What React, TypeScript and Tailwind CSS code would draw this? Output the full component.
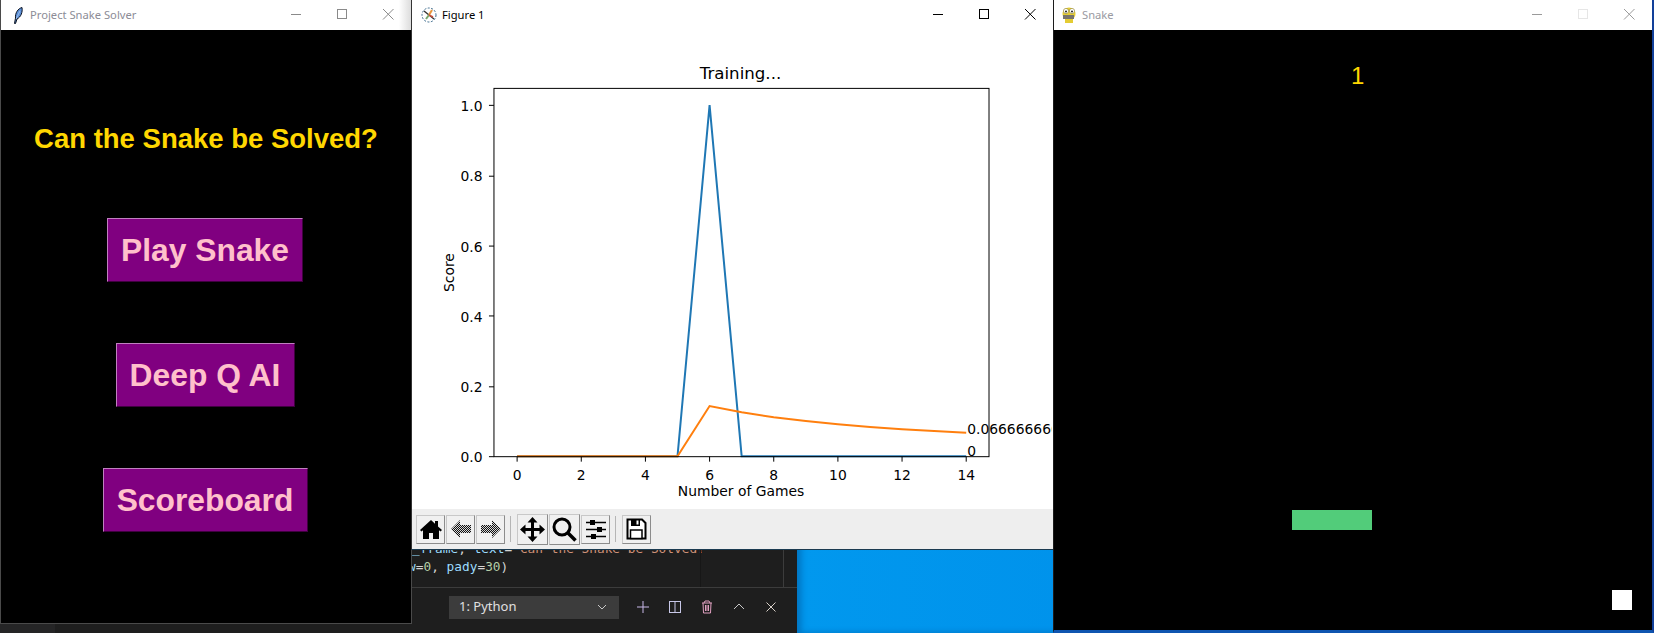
import React from 'react';

const blue = [0, 0, 0, 0, 0, 0, 1, 0, 0, 0, 0, 0, 0, 0, 0];
const mean = [0, 0, 0, 0, 0, 0, 1 / 7, 1 / 8, 1 / 9, 1 / 10, 1 / 11, 1 / 12, 1 / 13, 1 / 14, 1 / 15];

const px = (i: number) => 516.7 + i * 32.14 - 412;
const py = (v: number) => 457 - v * 351.7 - 30;
const line = (data: number[]) => data.map((v, i) => `${px(i)},${py(v)}`).join(' ');

const TitleButtons = ({ color, maxColor }: { color: string; maxColor?: string }) => (
  <div className="flex items-center">
    <svg width="46" height="30" viewBox="0 0 46 30"><path d="M18 14.500h10" stroke={color} fill="none" /></svg>
    <svg width="46" height="30" viewBox="0 0 46 30"><rect x="18.500" y="9.500" width="9" height="9" stroke={maxColor || color} fill="none" /></svg>
    <svg width="46" height="30" viewBox="0 0 46 30"><path d="M18 9l10.500 10.500M28.500 9L18 19.500" stroke={color} fill="none" /></svg>
  </div>
);

const Feather = () => (
  <svg width="10" height="17" viewBox="0 0 10 17">
    <path d="M1.500 16.500L2.500 11C2 6 5 1.500 9 .5C9.800 5 8 10 4 12L2.500 16.500Z" fill="#5b8fd8" stroke="#0b1220" strokeWidth="1" />
    <path d="M3 12L7 4" stroke="#cfe0f5" strokeWidth=".6" />
  </svg>
);

const FigureIcon = () => (
  <svg width="16" height="16" viewBox="0 0 16 16">
    <circle cx="8" cy="8" r="7" fill="#fff" stroke="#3b6a8c" strokeDasharray="2 1.500" />
    <path d="M3 4l10 8" stroke="#333" strokeWidth="1.400" />
    <path d="M8 8l3-5" stroke="#e9963c" strokeWidth="2" />
    <path d="M8 8l-3 4" stroke="#7aa86b" strokeWidth="2" />
    <path d="M8 8l4 2" stroke="#c9503c" strokeWidth="1.500" />
  </svg>
);

const PygameIcon = () => (
  <svg width="16" height="18" viewBox="0 0 16 18">
    <ellipse cx="8" cy="8" rx="6.500" ry="6.500" fill="#e4cc33" />
    <rect x="2" y="9" width="11" height="4" fill="#77736a" />
    <circle cx="5" cy="5" r="2.600" fill="#fff" stroke="#8a7a20" strokeWidth=".6" />
    <circle cx="11" cy="5" r="2.600" fill="#fff" stroke="#8a7a20" strokeWidth=".6" />
    <circle cx="5" cy="5.400" r="1" fill="#222" />
    <circle cx="11" cy="5.400" r="1" fill="#222" />
    <rect x="4" y="13" width="8" height="4" fill="#e4cc33" />
  </svg>
);

const ToolButton = ({ size, children }: { size: string; children: React.ReactNode }) => (
  <div className={`${size} flex items-center justify-center bg-[#f0f0f0] border border-t-[#c8c8c8] border-l-[#c8c8c8] border-r-[#8c8c8c] border-b-[#8c8c8c]`}>
    {children}
  </div>
);

const MenuButton = ({ label, width }: { label: string; width: string }) => (
  <button className={`${width} h-[64px] pt-[2px] bg-[#800080] text-[#ffc0cb] text-[31.800px] font-bold font-['Liberation_Sans',sans-serif] border border-t-[#c080c0] border-l-[#c080c0] border-r-[#400040] border-b-[#400040]`}>
    {label}
  </button>
);

const Chart = () => (
  <svg width="640" height="480" viewBox="0 0 640 480" className="block font-['DejaVu_Sans',sans-serif]">
    <text x="328.500" y="49" fontSize="16.670" textAnchor="middle" fill="#000">Training...</text>
    <polyline points={line(blue)} fill="none" stroke="#1f77b4" strokeWidth="2" />
    <polyline points={line(mean)} fill="none" stroke="#ff7f0e" strokeWidth="2" />
    <rect x="81.500" y="58.500" width="496" height="369" fill="none" stroke="#000" strokeWidth="1" />
    {[0, 2, 4, 6, 8, 10, 12, 14].map(t => (
      <g key={t}>
        <path d={`M${px(t)} 427.500v5`} stroke="#000" />
        <text x={px(t)} y="451" fontSize="13.890" textAnchor="middle" fill="#000">{t}</text>
      </g>
    ))}
    {[0, 0.2, 0.4, 0.6, 0.8, 1].map(t => (
      <g key={t}>
        <path d={`M76.500 ${Math.round(py(t)) + 0.5}h5`} stroke="#000" />
        <text x="70" y={py(t) + 6} fontSize="13.890" textAnchor="end" fill="#000">{t.toFixed(1)}</text>
      </g>
    ))}
    <text x="329" y="467" fontSize="13.890" textAnchor="middle" fill="#000">Number of Games</text>
    <text fontSize="13.890" textAnchor="middle" fill="#000" transform="translate(41,243) rotate(-90)">Score</text>
    <text x={px(14) + 1} y="405" fontSize="13.890" fill="#000">0.06666666666666667</text>
    <text x={px(14) + 1} y="427" fontSize="13.890" fill="#000">0</text>
  </svg>
);

const Toolbar = () => (
  <div className="h-[40px] bg-[#eeeeee] flex items-center pl-[4px] gap-[1px]">
    <svg width="0" height="0" className="absolute">
      <defs>
        <pattern id="dither" width="2" height="2" patternUnits="userSpaceOnUse">
          <rect width="2" height="2" fill="#d8d8d8" />
          <rect width="1" height="1" fill="#111" />
          <rect x="1" y="1" width="1" height="1" fill="#111" />
        </pattern>
      </defs>
    </svg>
    <ToolButton size="w-[29px] h-[29px]">
      <svg width="24" height="22" viewBox="0 0 24 22"><path d="M12 2L1 12l1.500 1.500L4 12.300V21h6v-6h4v6h6v-8.700l1.500 1.200L23 12l-4-3.600V3h-3v2.700z" fill="#000" /></svg>
    </ToolButton>
    <ToolButton size="w-[29px] h-[29px]">
      <svg width="22" height="20" viewBox="0 0 22 20"><path d="M1 10l9-9v5h11v8H10v5z" fill="url(#dither)" /></svg>
    </ToolButton>
    <ToolButton size="w-[29px] h-[29px]">
      <svg width="22" height="20" viewBox="0 0 22 20"><path d="M21 10l-9-9v5H1v8h11v5z" fill="url(#dither)" /></svg>
    </ToolButton>
    <div className="w-px h-[26px] bg-[#b5b5b5] ml-[4px] mr-[5px]" />
    <ToolButton size="w-[31px] h-[31px]">
      <svg width="25" height="25" viewBox="0 0 25 25"><path d="M12.500 0l5 5.500h-3.500v5.500h5.500V7.500l5.500 5-5.500 5V14H14v5.500h3.500l-5 5.500-5-5.500H11V14H5.500v3.500L0 12.500l5.500-5V11H11V5.500H7.500z" fill="#000" /></svg>
    </ToolButton>
    <ToolButton size="w-[31px] h-[31px]">
      <svg width="25" height="25" viewBox="0 0 25 25"><circle cx="10" cy="10" r="8" fill="none" stroke="#000" strokeWidth="3" /><path d="M15.500 15.500l8 8" stroke="#000" strokeWidth="3.500" /></svg>
    </ToolButton>
    <ToolButton size="w-[29px] h-[29px]">
      <svg width="22" height="22" viewBox="0 0 22 22"><path d="M1 4.500h20M1 11.500h20M1 18.500h20" stroke="#000" strokeWidth="1.500" /><rect x="5" y="2" width="5" height="5" fill="#000" /><rect x="12" y="9" width="5" height="5" fill="#000" /><rect x="6" y="16" width="5" height="5" fill="#000" /></svg>
    </ToolButton>
    <div className="w-px h-[26px] bg-[#b5b5b5] ml-[4px] mr-[5px]" />
    <ToolButton size="w-[29px] h-[29px]">
      <svg width="21" height="22" viewBox="0 0 21 22"><path d="M1.500 1.500h14.500l3.500 3.500v15.500h-18z" fill="#fff" stroke="#000" strokeWidth="2" /><rect x="5" y="1.500" width="9" height="6.500" fill="#000" /><rect x="10.500" y="2.500" width="2" height="4" fill="#fff" /><rect x="4.500" y="12" width="11.500" height="8.500" fill="#fff" stroke="#000" strokeWidth="1.500" /></svg>
    </ToolButton>
  </div>
);

export default function App() {
  return (
    <div className="relative w-[1654px] h-[633px] overflow-hidden bg-[#1e1e1e] font-['Liberation_Sans',sans-serif]">
      {/* desktop wallpaper */}
      <div className="absolute left-[797px] top-[500px] right-0 bottom-0 bg-gradient-to-r from-[#0198ee] to-[#0087e6] shadow-[inset_4px_0_6px_rgba(0,50,110,0.35)]" />
      <div className="absolute left-0 bottom-0 w-[55px] h-[10px] bg-[#252526]" />

      {/* vs code behind the windows */}
      <div className="absolute left-0 w-[797px] top-[550px] bottom-0 flex flex-col">
        <div className="relative h-[38px] border-b border-[#3c3c3c] font-['DejaVu_Sans_Mono',monospace] text-[12.800px] leading-[19px] pl-[412px] overflow-hidden">
          <div className="absolute left-[700px] top-0 bottom-0 w-px bg-[#171717]" />
          <div className="absolute left-[783px] top-0 bottom-0 w-px bg-[#3c3c3c]" />
          <div className="-mt-[11px] whitespace-nowrap text-[#9cdcfe]">_frame<span className="text-[#d4d4d4]">, </span>text<span className="text-[#d4d4d4]">=</span><span className="text-[#ce9178]">"Can the Snake be Solved?</span></div>
          <div className="-ml-[4px] -mt-[1px] text-[#9cdcfe]">w<span className="text-[#d4d4d4]">=</span><span className="text-[#b5cea8]">0</span><span className="text-[#d4d4d4]">, </span>pady<span className="text-[#d4d4d4]">=</span><span className="text-[#b5cea8]">30</span><span className="text-[#d4d4d4]">)</span></div>
        </div>
        <div className="flex items-center h-[45px] pl-[449px] pb-[7px]">
          <div className="w-[170px] h-[23px] bg-[#3c3c3c] text-[#e0e0e0] text-[13px] font-['Noto_Sans',sans-serif] flex items-center justify-between pl-[10px] pr-[12px]">
            <span>1: Python</span>
            <svg width="10" height="6" viewBox="0 0 10 6"><path d="M1 1l4 4 4-4" stroke="#c8c8c8" fill="none" /></svg>
          </div>
          <div className="flex items-center gap-[16px] ml-[16px]">
            <svg width="16" height="16" viewBox="0 0 16 16"><path d="M8 2v12M2 8h12" stroke="#c8b8e8" /></svg>
            <svg width="16" height="16" viewBox="0 0 16 16"><rect x="2.500" y="2.500" width="11" height="11" fill="none" stroke="#c8c8e8" /><path d="M8 2.500v11" stroke="#c8c8e8" /></svg>
            <svg width="16" height="16" viewBox="0 0 16 16"><path d="M3 4h10M5 4l1-2h4l1 2M4 4l.500 10h7L12 4M6.500 6v6M8 6v6M9.500 6v6" stroke="#e0a0c0" fill="none" /></svg>
            <svg width="16" height="16" viewBox="0 0 16 16"><path d="M3 10l5-5 5 5" stroke="#c8c8c8" fill="none" /></svg>
            <svg width="16" height="16" viewBox="0 0 16 16"><path d="M3.500 3.500l9 9M12.500 3.500l-9 9" stroke="#d8d0c8" fill="none" /></svg>
          </div>
        </div>
      </div>

      {/* tkinter menu window */}
      <div className="absolute left-0 top-0 w-[412px] h-[624px] flex flex-col bg-black border-l border-r border-b border-[#4a4a4a]">
        <div className="h-[30px] bg-[linear-gradient(to_right,white_97%,#dcdcdc)] flex items-center justify-between shrink-0">
          <div className="flex items-center gap-[7px] pl-[12px] text-[#8c8c96] text-[11.200px] font-['Noto_Sans',sans-serif]">
            <Feather />
            <span>Project Snake Solver</span>
          </div>
          <TitleButtons color="#8a8a8a" />
        </div>
        <div className="flex-1 flex flex-col items-center pt-[93px]">
          <h1 className="text-[#ffd700] text-[27.500px] font-bold leading-[31px]">Can the Snake be Solved?</h1>
          <div className="flex flex-col items-center gap-[61px] mt-[64px] pr-[2px]">
            <MenuButton label="Play Snake" width="w-[196px]" />
            <MenuButton label="Deep Q AI" width="w-[179px]" />
            <MenuButton label="Scoreboard" width="w-[205px]" />
          </div>
        </div>
      </div>

      {/* matplotlib figure window */}
      <div className="absolute left-[411px] top-0 w-[642px] h-[550px] flex flex-col bg-white border-l border-l-[#333333] border-b border-b-[#1a3a50]">
        <div className="h-[30px] bg-white flex items-center justify-between shrink-0">
          <div className="flex items-center gap-[5px] pl-[9px] text-black text-[11.200px] font-['Noto_Sans',sans-serif]">
            <FigureIcon />
            <span>Figure 1</span>
          </div>
          <TitleButtons color="#000" />
        </div>
        <Chart />
        <Toolbar />
      </div>

      {/* pygame window */}
      <div className="absolute left-[1053px] top-0 w-[601px] h-[633px] flex flex-col bg-black border-l border-l-[#1c1c1c] border-r-2 border-r-[#12409a] border-b-[3px] border-b-[#0f55b0]">
        <div className="h-[30px] bg-white flex items-center justify-between shrink-0">
          <div className="flex items-center gap-[5px] pl-[7px] text-[#9a9aa2] text-[11.200px] font-['Noto_Sans',sans-serif]">
            <PygameIcon />
            <span>Snake</span>
          </div>
          <TitleButtons color="#9a9a9a" maxColor="#e6e6e6" />
        </div>
        <div className="relative flex-1">
          <span className="absolute left-[297px] top-[32px] text-[#ffd700] text-[24px] leading-[28px]">1</span>
          <div className="absolute left-[238px] top-[480px] w-[80px] h-[20px] bg-[#52cc7a]" />
          <div className="absolute left-[558px] top-[560px] w-[20px] h-[20px] bg-white" />
        </div>
      </div>
    </div>
  );
}
